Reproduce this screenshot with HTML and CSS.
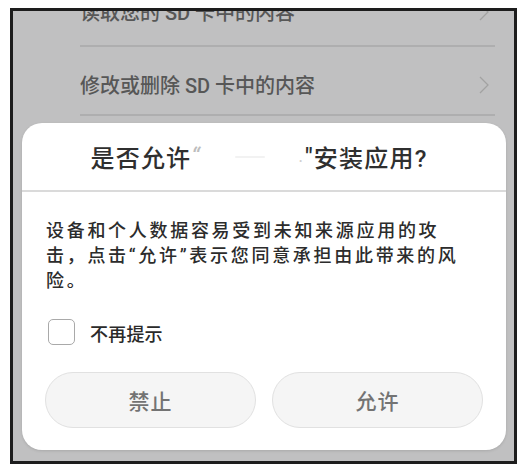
FILE: index.html
```html
<!DOCTYPE html>
<html lang="zh-CN">
<head>
<meta charset="utf-8">
<title>安装应用</title>
<link rel="stylesheet" href="styles.css">
</head>
<body>
<div class="frame">
  <div class="list">
    <div class="item item-first">
      <span class="item-text">读取您的 SD 卡中的内容</span>
      <svg class="chev" width="10" height="18" viewBox="0 0 10 18"><polyline points="1,1 9,9 1,17" fill="none" stroke="#a2a2a2" stroke-width="1.3"/></svg>
    </div>
    <div class="item">
      <span class="item-text">修改或删除 SD 卡中的内容</span>
      <svg class="chev" width="10" height="18" viewBox="0 0 10 18"><polyline points="1,1 9,9 1,17" fill="none" stroke="#a2a2a2" stroke-width="1.3"/></svg>
    </div>
  </div>
  <div class="dialog">
    <div class="title">是否允许<span class="q-light">“</span><span class="redact"><span class="smudge"></span></span><span class="dot">.</span><span class="q">"</span>安装应用?</div>
    <p class="msg">设备和个人数据容易受到未知来源应用的攻<br>击，点击“允许”表示您同意承担由此带来的风<br>险。</p>
    <label class="check-row"><span class="box"></span><span class="check-label">不再提示</span></label>
    <div class="buttons">
      <button class="btn">禁止</button>
      <button class="btn">允许</button>
    </div>
  </div>
</div>
</body>
</html>
```
FILE: styles.css
```css
html, body {
  margin: 0;
  padding: 0;
  background: #ffffff;
}
body {
  font-family: "Roboto", "Noto Sans CJK SC", sans-serif;
}
.frame {
  box-sizing: border-box;
  margin: 8px 0 0 10px;
  width: 507px;
  height: 456px;
  border: 3px solid #1d1d1d;
  background: #c0c0c1;
  overflow: hidden;
}
.list {
  margin-top: -33px;
  margin-left: 67px;
  margin-right: 19px;
}
.item {
  box-sizing: border-box;
  height: 69px;
  padding-top: 8px;
  padding-right: 6px;
  border-bottom: 2px solid #aeaeaf;
  display: flex;
  align-items: center;
  justify-content: space-between;
}
.item-first {
  padding-top: 0;
}
.item-text {
  font-size: 20px;
  font-weight: 500;
  color: #575757;
}
.chev {
  display: block;
}
.dialog {
  margin: 7px 0 0 9px;
  width: 484px;
  height: 327px;
  box-sizing: border-box;
  background: #ffffff;
  border-radius: 20px;
  box-shadow: 0 1px 3px rgba(0, 0, 0, 0.12);
  padding-bottom: 22px;
  display: flex;
  flex-direction: column;
}
.title {
  height: 67px;
  border-bottom: 2px solid #dadada;
  display: flex;
  align-items: center;
  justify-content: center;
  font-size: 24px;
  font-weight: 500;
  letter-spacing: 1.2px;
  color: #2f2f2f;
  padding-right: 10px;
}
.q-light {
  color: #bdbdbd;
  font-style: italic;
  font-weight: 400;
}
.redact {
  display: inline-flex;
  align-items: center;
  justify-content: center;
  width: 98px;
  height: 20px;
}
.smudge {
  width: 30px;
  height: 2px;
  background: #f2f2f2;
  border-radius: 1px;
}
.dot {
  color: #cfcfcf;
  font-size: 14px;
  margin-right: 1px;
}
.q {
  color: #2f2f2f;
}
.msg {
  margin: 25.5px 0 0 0;
  padding: 0 24px;
  font-size: 18px;
  font-weight: 500;
  line-height: 25px;
  letter-spacing: 2.7px;
  color: #2c2c2c;
  white-space: nowrap;
}
.check-row {
  margin: 26.5px 0 0 26px;
  height: 26px;
  display: flex;
  align-items: center;
  gap: 15px;
}
.box {
  box-sizing: border-box;
  width: 27px;
  height: 26px;
  border: 1.5px solid #a9a9a9;
  border-radius: 5px;
  background: #ffffff;
}
.check-label {
  font-size: 18px;
  font-weight: 500;
  color: #2a2a2a;
  letter-spacing: 0.2px;
  padding-top: 2px;
}
.buttons {
  margin-top: 27px;
  padding: 0 23px;
  display: flex;
  gap: 16px;
}
.btn {
  flex: 1;
  height: 56px;
  border: 1px solid #e1e1e1;
  border-radius: 28px;
  background: #f5f5f5;
  font-family: "Roboto", "Noto Sans CJK SC", sans-serif;
  font-size: 21px;
  font-weight: 500;
  letter-spacing: 1px;
  color: #737373;
  padding: 0;
}
```
